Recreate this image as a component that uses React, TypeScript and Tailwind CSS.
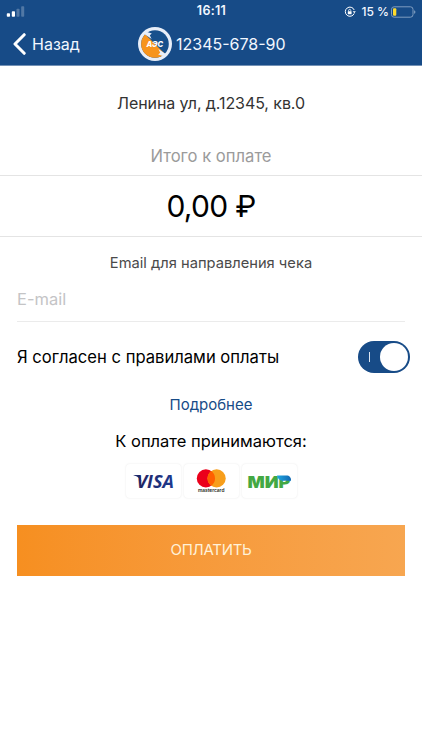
function SignalIcon() {
  return (
    <svg width="19" height="12" viewBox="0 0 19 12" fill="#fff">
      <rect x="0.8" y="7.2" width="3.2" height="3.6" rx="0.8" />
      <rect x="5.8" y="5.2" width="3.2" height="5.6" rx="0.8" />
      <rect x="10.5" y="2.8" width="3" height="8" rx="0.8" opacity="0.25" />
      <rect x="15.2" y="0.3" width="3" height="10.5" rx="0.8" opacity="0.25" />
    </svg>
  );
}

function RotationLockIcon() {
  return (
    <svg width="12" height="12" viewBox="0 0 12 12" fill="none" stroke="#fff">
      <path d="M10.2 7.4A4.6 4.6 0 1 1 10.2 4" strokeWidth="1" />
      <path d="M8.7 5.2h3.1l-1.5 2z" fill="#fff" stroke="none" />
      <rect x="3.8" y="5.3" width="3.8" height="3" rx="0.4" fill="#fff" stroke="none" />
      <path d="M4.6 5.4V4.5a1.1 1.1 0 0 1 2.2 0v.9" strokeWidth="0.8" />
    </svg>
  );
}

function BatteryIcon() {
  return (
    <svg width="26" height="12" viewBox="0 0 26 12" fill="none">
      <rect x="0.5" y="0.8" width="21.5" height="10.4" rx="2.6" stroke="#8ba6c6" strokeWidth="0.9" />
      <rect x="2" y="2.3" width="3.3" height="7.4" rx="1" fill="#ffdb2c" />
      <path d="M23.2 4.2c1.6.5 1.6 3.1 0 3.6z" fill="#8ba6c6" />
    </svg>
  );
}

function CompanyLogo() {
  return (
    <svg width="34" height="34" viewBox="0 0 34 34">
      <circle cx="17" cy="17" r="17" fill="#e8eef8" />
      <circle cx="17" cy="17" r="13.8" fill="#17508c" />
      <path d="M7.2 7.2A13.8 13.8 0 0 0 26.8 26.8z" fill="#f7941d" />
      <path d="M4.8 6.2 7.6 4.6 13.8 6.6 11.8 8.2 13.6 12 7 7.4z" fill="#e8eef8" />
      <path d="M29.2 27.8 26.4 29.4 20.2 27.4 22.2 25.8 20.4 22 27 26.6z" fill="#e8eef8" />
      <text
        x="16.8"
        y="19.9"
        textAnchor="middle"
        textLength="16.5"
        lengthAdjust="spacingAndGlyphs"
        fontFamily="Inter, sans-serif"
        fontSize="8"
        fontWeight="800"
        fontStyle="italic"
        fill="#fff"
      >
        АЭС
      </text>
    </svg>
  );
}

function VisaLogo() {
  return (
    <svg width="55" height="34" viewBox="0 0 55 34">
      <defs>
        <linearGradient id="visa" x1="0" y1="0" x2="1" y2="0">
          <stop offset="0" stopColor="#20235f" />
          <stop offset="1" stopColor="#1c3a91" />
        </linearGradient>
      </defs>
      <path d="M7.5 10.9h5.2c.9 0 1.5.5 1.7 1.4l1 5.2C14.3 14.6 11.8 12.4 7.5 11.2z" fill="url(#visa)" />
      <text
        x="10.4"
        y="23.8"
        textLength="37.5"
        lengthAdjust="spacingAndGlyphs"
        fontFamily="'Open Sans', sans-serif"
        fontSize="18"
        fontWeight="700"
        fontStyle="italic"
        fill="url(#visa)"
      >
        VISA
      </text>
    </svg>
  );
}

function MastercardLogo() {
  return (
    <svg width="55" height="34" viewBox="0 0 55 34">
      <circle cx="21.9" cy="14.4" r="9.1" fill="#eb001b" />
      <circle cx="32.6" cy="14.4" r="9.1" fill="#f79e1b" />
      <path d="M27.25 7a9.1 9.1 0 0 1 0 14.8 9.1 9.1 0 0 1 0-14.8z" fill="#ff5f00" />
      <text
        x="27.2"
        y="27.6"
        textAnchor="middle"
        textLength="26.5"
        lengthAdjust="spacingAndGlyphs"
        fontFamily="Inter, sans-serif"
        fontSize="4.8"
        fontWeight="600"
        fill="#231f20"
      >
        mastercard
      </text>
    </svg>
  );
}

function MirLogo() {
  return (
    <svg width="55" height="34" viewBox="0 0 55 34">
      <defs>
        <linearGradient id="mir" x1="0" y1="0" x2="1" y2="0">
          <stop offset="0" stopColor="#1fa7e0" />
          <stop offset="1" stopColor="#1168b3" />
        </linearGradient>
      </defs>
      <text
        x="5.4"
        y="23.8"
        textLength="43"
        lengthAdjust="spacingAndGlyphs"
        fontFamily="Inter, sans-serif"
        fontSize="16"
        fontWeight="900"
        fill="#43a843"
      >
        МИР
      </text>
      <path d="M35 11.6h9.4c3.1 0 4.9 2 4.6 5.2h-8.6c-2.8 0-4.8-2.2-5.4-5.2z" fill="url(#mir)" />
    </svg>
  );
}

function PaymentCard({ children }: { children: React.ReactNode }) {
  return (
    <div className="h-[34px] w-[55px] rounded-[4px] bg-white shadow-[0_0_2px_rgba(0,0,0,0.1)]">
      {children}
    </div>
  );
}

function Header() {
  return (
    <header className="h-[66px] border-b border-[#7391b5] bg-[#174b87] text-[#f2f7ff]">
      <div className="grid h-[23px] grid-cols-3 items-center pl-[6px] pr-[5px]">
        <SignalIcon />
        <span className="text-center text-[12.5px] font-semibold tracking-[0.3px]">16:11</span>
        <div className="flex items-center justify-end">
          <RotationLockIcon />
          <span className="ml-[5px] mr-[2px] whitespace-nowrap text-[12px] font-medium">15 %</span>
          <BatteryIcon />
        </div>
      </div>
      <div className="flex h-[41px] items-center">
        <button className="flex w-[138px] items-center pl-[13px] text-[16px]">
          <svg width="13" height="22" viewBox="0 0 13 22" fill="none" className="mr-[6px]">
            <path d="M11.2 1.7 2 11l9.2 9.3" stroke="#fff" strokeWidth="3" strokeLinecap="round" strokeLinejoin="round" />
          </svg>
          Назад
        </button>
        <CompanyLogo />
        <span className="ml-[4px] text-[16px]">12345-678-90</span>
      </div>
    </header>
  );
}

function App() {
  return (
    <div className="min-h-[750px] bg-white font-['Inter','Liberation_Sans',sans-serif] text-black">
      <Header />

      <section className="text-center">
        <p className="pt-[25px] text-[16px] leading-6 tracking-[-0.08px] text-[#333]">Ленина ул, д.12345, кв.0</p>
        <p className="pt-[29px] text-[16.6px] leading-6 text-[#9b9b9b]">Итого к оплате</p>
        <div className="mt-[7px] flex h-[62px] items-center justify-center border-y border-[#e4e4e4] text-[30px] tracking-[-0.7px]">
          0,00 ₽
        </div>
      </section>

      <main className="px-[17px]">
        <p className="pt-[16px] text-center text-[14.7px] leading-5 text-[#4a4a4a]">
          Email для направления чека
        </p>
        <input
          placeholder="E-mail"
          className="mt-[4px] block h-[45px] w-full border-b border-[#ebebeb] text-[16.5px] outline-none placeholder:text-[#c4c4c6]"
        />
        <div className="flex h-[70px] w-[392.5px] items-center justify-between whitespace-nowrap text-[16.6px]">
          Я согласен с правилами оплаты
          <button className="flex h-8 w-[52px] shrink-0 items-center justify-between rounded-full bg-[#174b87] pl-[11px] pr-[2px]">
            <span className="h-[10px] w-px bg-[#dce6f2]" />
            <span className="size-7 rounded-full bg-white" />
          </button>
        </div>
        <p className="pt-[1px] text-center text-[15px] leading-6 text-[#174b87]">Подробнее</p>
        <p className="pt-[12px] text-center text-[16.5px] leading-6">К оплате принимаются:</p>
        <div className="mt-[11px] flex justify-center gap-[3px]">
          <PaymentCard>
            <VisaLogo />
          </PaymentCard>
          <PaymentCard>
            <MastercardLogo />
          </PaymentCard>
          <PaymentCard>
            <MirLogo />
          </PaymentCard>
        </div>
        <button className="mt-[27px] block h-[51px] w-full bg-linear-to-r from-[#f68f20] to-[#f7a650] text-[15px] tracking-[-0.3px] text-[#fff1d8]">
          ОПЛАТИТЬ
        </button>
      </main>
    </div>
  );
}

export default App;
